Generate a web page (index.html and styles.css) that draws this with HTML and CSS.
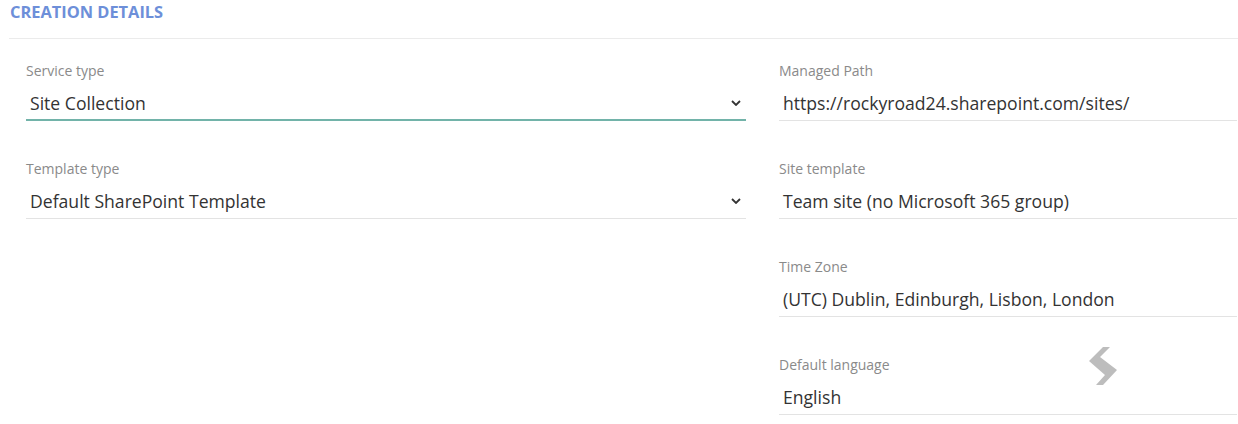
FILE: index.html
```html
<!DOCTYPE html>
<html lang="en">
<head>
  <meta charset="UTF-8">
  <title>Creation Details</title>
  <link rel="stylesheet" href="styles.css">
</head>
<body>
  <div class="section">
    <h3 class="section-title">CREATION DETAILS</h3>

    <div class="form-grid">
      <!-- left column -->
      <div class="column">
        <div class="field">
          <label class="field-label">Service type</label>
          <div class="field-value select focused">
            <span>Site Collection</span>
            <svg class="chevron" width="10" height="6" viewBox="0 0 10 6"><path d="M1 1l4 4 4-4" fill="none" stroke="#333" stroke-width="1.8"/></svg>
          </div>
        </div>

        <div class="field">
          <label class="field-label">Template type</label>
          <div class="field-value select">
            <span>Default SharePoint Template</span>
            <svg class="chevron" width="10" height="6" viewBox="0 0 10 6"><path d="M1 1l4 4 4-4" fill="none" stroke="#333" stroke-width="1.8"/></svg>
          </div>
        </div>
      </div>

      <!-- right column -->
      <div class="column">
        <div class="field">
          <label class="field-label">Managed Path</label>
          <div class="field-value">https://rockyroad24.sharepoint.com/sites/</div>
        </div>

        <div class="field">
          <label class="field-label">Site template</label>
          <div class="field-value">Team site (no Microsoft 365 group)</div>
        </div>

        <div class="field">
          <label class="field-label">Time Zone</label>
          <div class="field-value">(UTC) Dublin, Edinburgh, Lisbon, London</div>
        </div>

        <div class="field">
          <label class="field-label">Default language</label>
          <div class="field-value">English</div>
          <!-- loading marker -->
          <svg class="spinner" width="30" height="40" viewBox="0 0 30 40">
            <polygon points="15,1 22,1 12,11 29,24 15,39 8,39 17,29 1,15" fill="#bdbdbd"/>
          </svg>
        </div>
      </div>
    </div>
  </div>
</body>
</html>
```

FILE: styles.css
```css
body {
  margin: 0;
  font-family: "Open Sans", Arial, sans-serif;
  background: white;
}

.section {
  padding-left: 9px;
}

.section-title {
  margin: 0;
  padding: 1px 0 15px 1px;
  font-size: 16.4px;
  line-height: 22px;
  font-weight: bold;
  color: #6d8fd9;
  border-bottom: 1px solid #ebebeb;
}

.form-grid {
  display: grid;
  grid-template-columns: 720px 458px;
  column-gap: 33px;
  padding: 23px 0 0 17px;
}

.column {
  display: flex;
  flex-direction: column;
  gap: 39px;
}

.field {
  position: relative;
}

.field-label {
  display: block;
  font-size: 14px;
  line-height: 18px;
  color: #8a8a8a;
  margin-bottom: 6px;
}

.field-value {
  display: flex;
  align-items: center;
  justify-content: space-between;
  height: 35px;
  box-sizing: border-box;
  padding: 0 5px 0 4px;
  font-size: 17.6px;
  color: #333;
  border-bottom: 1px solid #e3e3e3;
}

.field-value.focused {
  border-bottom: 2px solid #72b3a9;
}

.chevron {
  display: block;
}

.spinner {
  position: absolute;
  left: 309px;
  top: -10px;
}
```
